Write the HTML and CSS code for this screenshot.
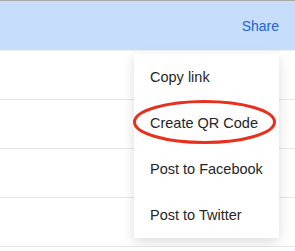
FILE: index.html
```html
<!DOCTYPE html>
<html lang="en">
  <head>
    <meta charset="UTF-8" />
    <meta name="viewport" content="width=device-width, initial-scale=1.0" />
    <title>Share menu</title>

    <link rel="stylesheet" href="styles.css">
  </head>
  <body>
    <main class="page">
      <header class="toolbar">
        <button class="share-button">Share</button>
      </header>

      <ul class="rows">
        <li class="row"></li>
        <li class="row"></li>
        <li class="row"></li>
        <li class="row"></li>
      </ul>

      <!-- Share dropdown -->
      <ul class="share-menu">
        <li class="share-menu-item">Copy link</li>
        <li class="share-menu-item">Create QR Code</li>
        <li class="share-menu-item">Post to Facebook</li>
        <li class="share-menu-item">Post to Twitter</li>
      </ul>

      <!-- Annotation round the QR item -->
      <svg class="highlight" width="147" height="49" viewBox="0 0 147 49">
        <ellipse cx="72.5" cy="24" rx="70" ry="20.5" fill="none" stroke="#e8301c" stroke-width="3" />
      </svg>
    </main>
  </body>
</html>
```

FILE: styles.css
```css
body {
  margin: 0;
  font-family: "Liberation Sans", Arial, sans-serif;
  background: #fff;
}

.page {
  position: relative;
}

.toolbar {
  display: flex;
  justify-content: flex-end;
  align-items: center;
  height: 49px;
  padding-right: 16px;
  background: #c6ddfb;
  border-top: 1px solid #a9a9a9;
  border-bottom: 1px solid #edf0f3;
}

.share-button {
  padding: 0;
  border: none;
  background: none;
  color: #1d62d6;
  font-family: inherit;
  font-size: 14px;
}

.rows {
  margin: 0;
  padding: 0;
  list-style: none;
}

.row {
  height: 48px;
  border-bottom: 1px solid #e6e6e6;
}

.share-menu {
  position: absolute;
  top: 54px;
  right: 16px;
  width: 145px;
  margin: 0;
  padding: 0;
  list-style: none;
  background: #fff;
  box-shadow: 0 4px 12px rgba(0, 0, 0, 0.14);
}

.share-menu-item {
  display: flex;
  align-items: center;
  height: 46px;
  padding-left: 16px;
  color: #262626;
  font-size: 14.5px;
}

.highlight {
  position: absolute;
  top: 98px;
  left: 132px;
}
```
